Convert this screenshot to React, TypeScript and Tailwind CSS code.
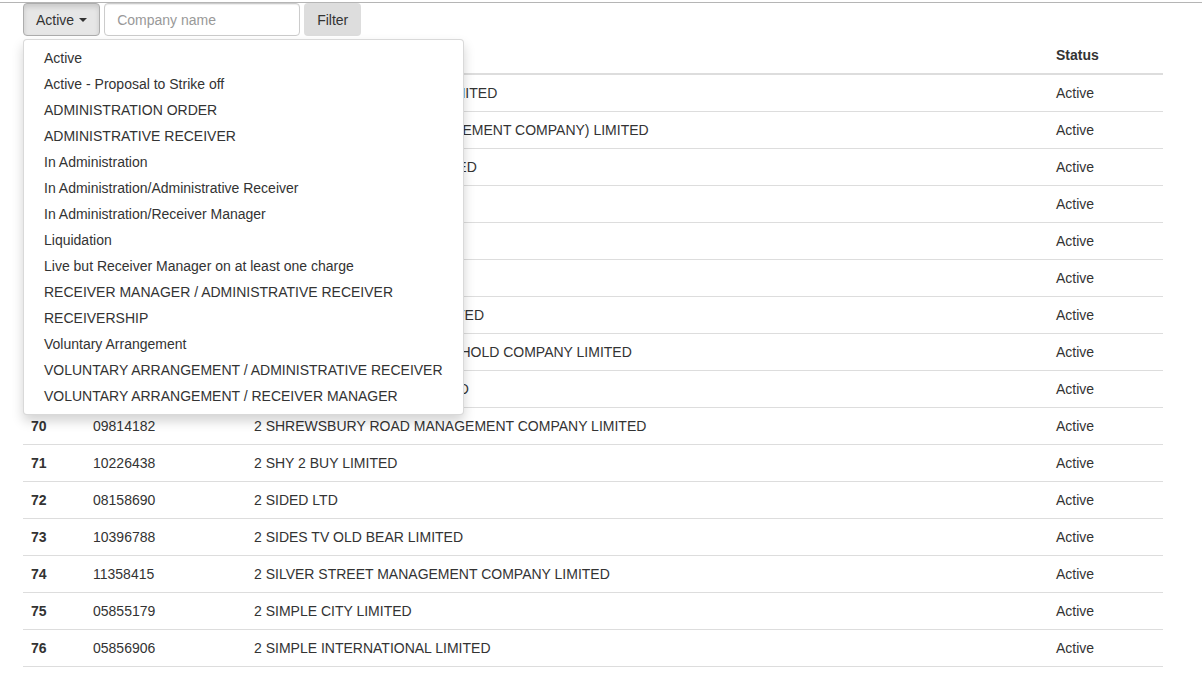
import React from 'react';

const statuses = [
    'Active',
    'Active - Proposal to Strike off',
    'ADMINISTRATION ORDER',
    'ADMINISTRATIVE RECEIVER',
    'In Administration',
    'In Administration/Administrative Receiver',
    'In Administration/Receiver Manager',
    'Liquidation',
    'Live but Receiver Manager on at least one charge',
    'RECEIVER MANAGER / ADMINISTRATIVE RECEIVER',
    'RECEIVERSHIP',
    'Voluntary Arrangement',
    'VOLUNTARY ARRANGEMENT / ADMINISTRATIVE RECEIVER',
    'VOLUNTARY ARRANGEMENT / RECEIVER MANAGER',
];

const rows = [
    { n: 61, num: '11047723', name: '2 SHEPHERDS MARKET UK LIMITED' },
    { n: 62, num: '10561840', name: '2 SHERWOOD COURT (MANAGEMENT COMPANY) LIMITED' },
    { n: 63, num: '09227805', name: '2 SHIRLAND ROAD FLAT LIMITED' },
    { n: 64, num: '10938311', name: '2 SHOES LTD' },
    { n: 65, num: '08403766', name: '2 SHOP 4 U LTD' },
    { n: 66, num: '11122049', name: '2 SHORE LTD' },
    { n: 67, num: '06517336', name: '2 SHORTLANDS GROVES LIMITED' },
    { n: 68, num: '04470021', name: '2 SHREWSBURY HOUSE FREEHOLD COMPANY LIMITED' },
    { n: 69, num: '07896214', name: '2 SHREWSBURY ROAD LIMITED' },
    { n: 70, num: '09814182', name: '2 SHREWSBURY ROAD MANAGEMENT COMPANY LIMITED' },
    { n: 71, num: '10226438', name: '2 SHY 2 BUY LIMITED' },
    { n: 72, num: '08158690', name: '2 SIDED LTD' },
    { n: 73, num: '10396788', name: '2 SIDES TV OLD BEAR LIMITED' },
    { n: 74, num: '11358415', name: '2 SILVER STREET MANAGEMENT COMPANY LIMITED' },
    { n: 75, num: '05855179', name: '2 SIMPLE CITY LIMITED' },
    { n: 76, num: '05856906', name: '2 SIMPLE INTERNATIONAL LIMITED' },
];

// Lista de empresas com filtro de status aberto
const App: React.FC = () => {
    return (
        <div className="min-h-[677px] bg-white text-[#333] text-[14px] leading-[20px] font-['Liberation_Sans',Arial,sans-serif]">
            <div className="h-[2px]" />
            <div className="h-px bg-[#b5b5b5]" />
            <div className="ml-[23px] w-[1140px] relative">
                <div className="flex items-center h-[33px]">
                    <button className="h-[33px] px-[12px] flex items-center gap-[5px] bg-[#e6e6e6] border border-[#adadad] rounded-[4px] shadow-[inset_0_3px_5px_rgba(0,0,0,0.125)]">
                        Active
                        <span className="w-0 h-0 border-x-[4px] border-x-transparent border-t-[4px] border-t-[#333] mt-px" />
                    </button>
                    <input
                        className="ml-[4px] h-[33px] w-[196px] px-[12px] border border-[#ccc] rounded-[4px] shadow-[inset_0_1px_1px_rgba(0,0,0,0.075)] placeholder:text-[#999] outline-none"
                        placeholder="Company name"
                    />
                    <button className="ml-[4px] h-[33px] px-[13px] bg-[#ddd] rounded-[4px]">Filter</button>
                </div>

                <table className="w-full mt-px border-collapse">
                    <thead>
                        <tr className="border-b-2 border-[#ddd] text-left">
                            <th className="w-[62px] p-[8px] font-bold">#</th>
                            <th className="w-[161px] p-[8px] font-bold">Number</th>
                            <th className="p-[8px] font-bold">Name</th>
                            <th className="w-[115px] p-[8px] font-bold">Status</th>
                        </tr>
                    </thead>
                    <tbody>
                        {rows.map(r => (
                            <tr key={r.n} className="border-b border-[#ddd]">
                                <td className="p-[8px] font-bold">{r.n}</td>
                                <td className="p-[8px]">{r.num}</td>
                                <td className="p-[8px]">{r.name}</td>
                                <td className="p-[8px]">Active</td>
                            </tr>
                        ))}
                    </tbody>
                </table>

                <ul className="absolute left-0 top-[36px] w-[441px] py-[5px] bg-white border border-[rgba(0,0,0,0.15)] rounded-[4px] shadow-[0_6px_12px_rgba(0,0,0,0.175)]">
                    {statuses.map(s => (
                        <li key={s} className="px-[20px] py-[3px] whitespace-nowrap">{s}</li>
                    ))}
                </ul>
            </div>
        </div>
    );
};

export default App;
